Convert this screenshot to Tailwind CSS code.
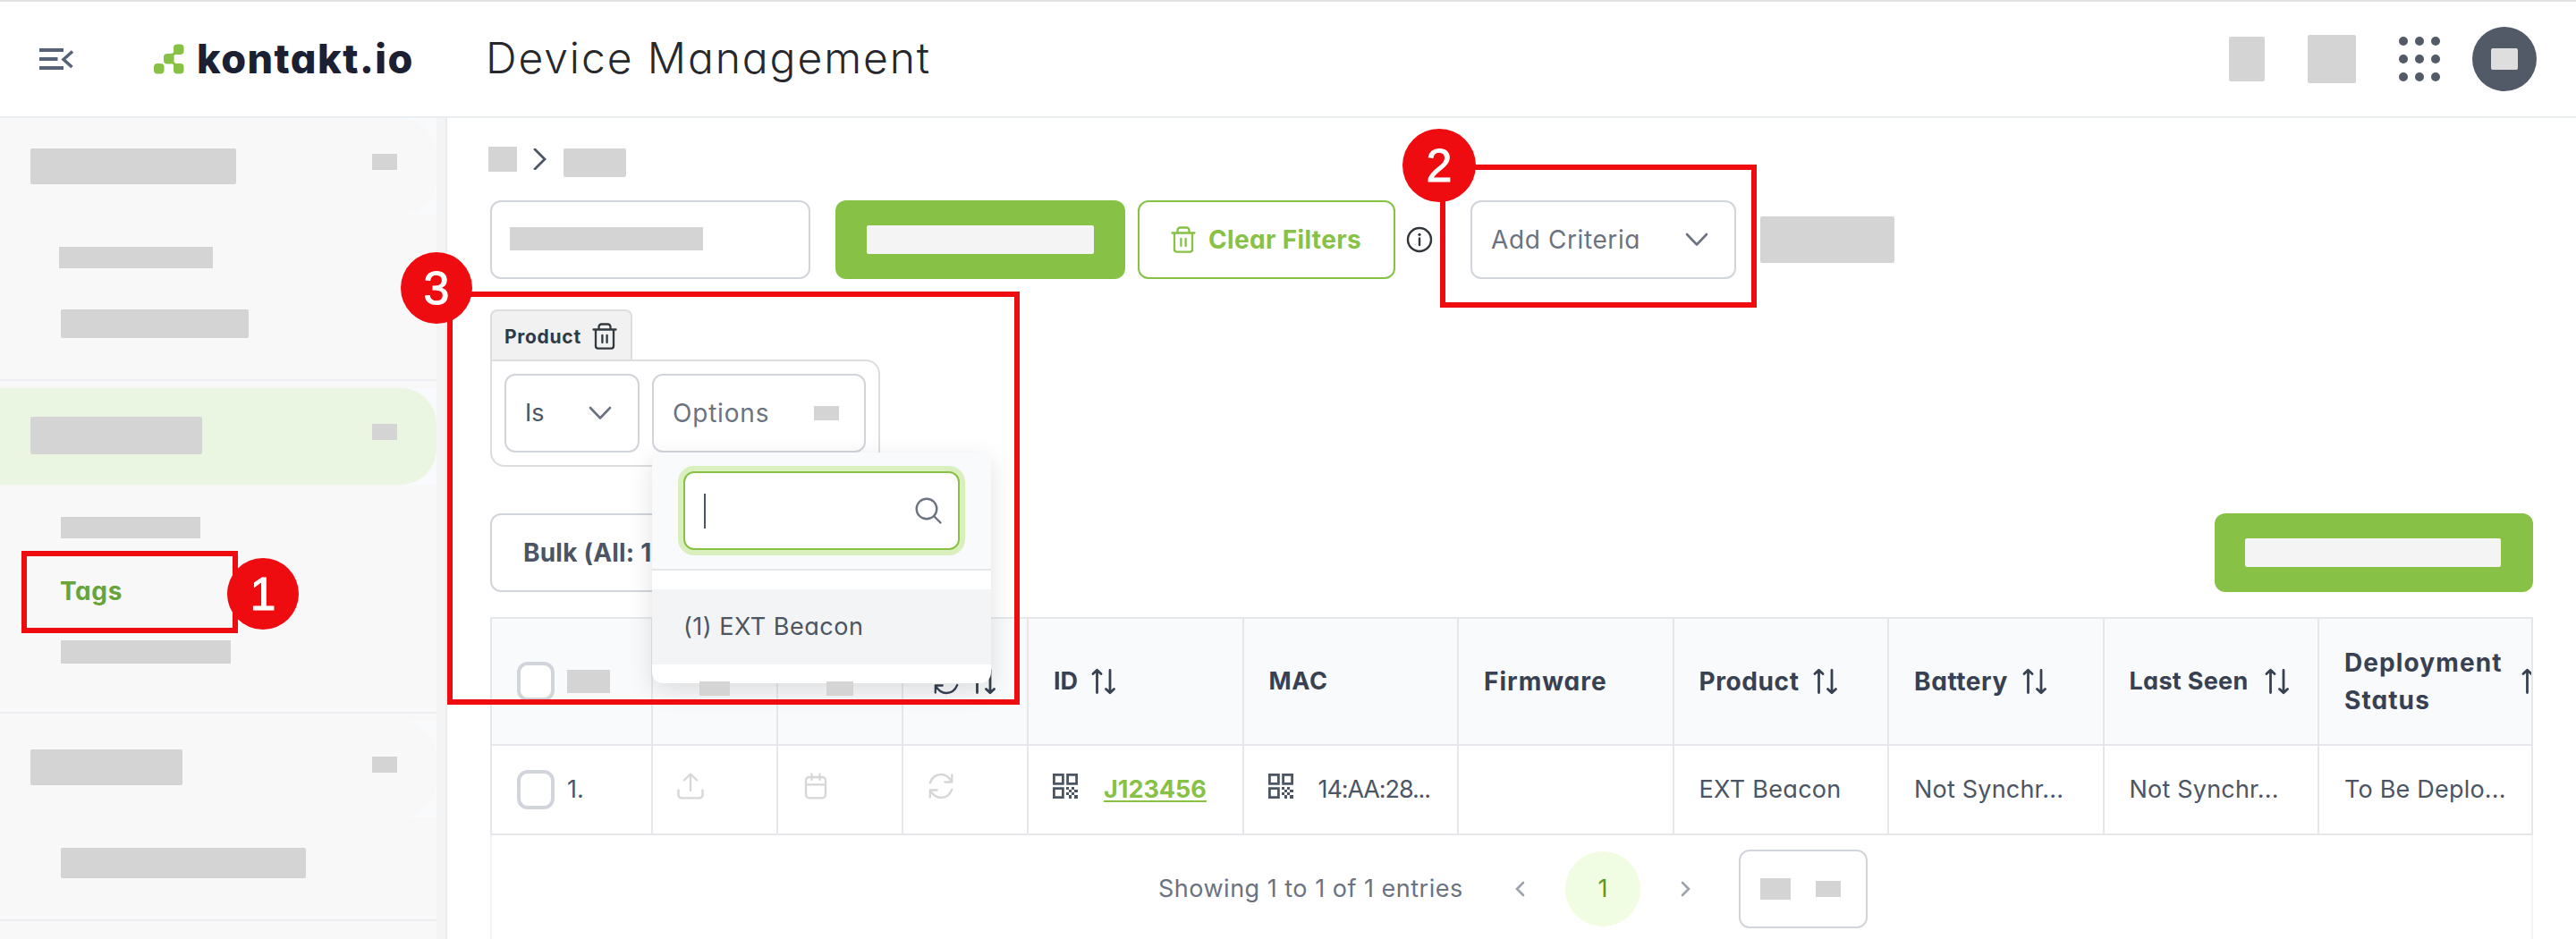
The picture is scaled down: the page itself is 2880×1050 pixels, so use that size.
<!DOCTYPE html>
<html lang="en">
  <head>
    <meta charset="UTF-8" />
    <meta name="viewport" content="width=device-width, initial-scale=1.0" />
    <title>Device Management</title>
    <script src="https://cdn.jsdelivr.net/npm/@tailwindcss/browser@4"></script>
  </head>
  <body
    class="relative w-[2880px] h-[1050px] overflow-hidden bg-white font-['Inter',sans-serif] text-[27px] text-[#4b5563] [font-feature-settings:'cv11']"
  >
    <!-- Shared icons -->
    <svg class="hidden">
      <symbol id="trash" viewBox="0 0 28 30">
        <g fill="none" stroke="currentColor" stroke-width="2.3" stroke-linecap="round" stroke-linejoin="round">
          <path d="M1.5 7.5h25M7.5 7V4.5a3 3 0 0 1 3-3h7a3 3 0 0 1 3 3V7M4 7.5V26a2.6 2.6 0 0 0 2.6 2.6h14.8A2.6 2.6 0 0 0 24 26V7.5M11.4 14v8M16.6 14v8" />
        </g>
      </symbol>
      <symbol id="sort" viewBox="0 0 28 30">
        <g fill="none" stroke="currentColor" stroke-width="2.8" stroke-linecap="round" stroke-linejoin="round">
          <path d="M6.5 27.5V2.5M2 6.5l4.5-4.3L11 6.5M21 2.5v25M16.5 23.5l4.5 4.3 4.5-4.3" />
        </g>
      </symbol>
      <symbol id="refresh" viewBox="0 0 28 30">
        <g fill="none" stroke="currentColor" stroke-width="2.3" stroke-linecap="round" stroke-linejoin="round">
          <path d="M1.8 11.5C4 5.5 9 2 14.5 2c4.8 0 8.5 3 11.8 8M26.3 2.5v8h-8M26.2 19c-2.2 5.5-7 9-12.4 9-4.8 0-8.6-3-12-8M1.8 27.5v-8h8" />
        </g>
      </symbol>
      <symbol id="chevron" viewBox="0 0 26 16">
        <path d="M2 2l11 11.500L24 2" fill="none" stroke="currentColor" stroke-width="2.6" stroke-linecap="round" stroke-linejoin="round" />
      </symbol>
      <symbol id="qr" viewBox="0 0 30 30">
        <g fill="none" stroke="currentColor" stroke-width="2.8">
          <path d="M2.4 2.4h10v10h-10zM17.6 2.4h10v10h-10zM2.4 17.6h10v10h-10z" />
        </g>
        <path
          fill="currentColor"
          d="M16 16h3v3h-3zM22 16h3v3h-3zM19 19h3v3h-3zM25 19h4v3h-4zM16 22h3v3h-3zM22 22h3v3h-3zM19 25h3v4h-3zM25 25h4v4h-4z"
        />
      </symbol>
    </svg>

    <header class="flex items-center h-[132px] border-t-2 border-t-[#e2e2e2] border-b-2 border-b-[#e9eef3] px-11">
      <svg class="w-10 h-[26px]" viewBox="0 0 40 26">
        <path d="M0 3h27M0 13h20.5M0 23h27" stroke="#566377" stroke-width="4" />
        <path d="M37 4.5L27 13.5l9.5 8.5" fill="none" stroke="#566377" stroke-width="3.6" />
      </svg>
      <div class="flex items-center ml-22 w-[371px]">
        <svg class="w-[34px] h-[34px]" viewBox="0 0 34 34" fill="#87c145">
          <rect x="0" y="22" width="11.5" height="11.5" rx="4" />
          <rect x="11" y="11" width="11.5" height="11.5" rx="4" />
          <rect x="22" y="0.5" width="11.5" height="11.5" rx="4" />
          <rect x="22" y="22" width="11.5" height="11.5" rx="4" />
          <path d="M17 11c4 0 6-1 6.5-4l4 4.500c-4 0-6 1.500-6.500 4.500 0 3 2.500 6.500 6.500 6.500L23 27c0-4-3-5.500-6-5.500z" />
        </svg>
        <span class="mb-0.5 ml-3.5 text-[45px] leading-none font-extrabold tracking-[1.5px] text-[#1b2032]">kontakt.io</span>
      </div>
      <h1 class="mb-0.5 text-[48px] leading-none font-light tracking-[1.9px] text-[#26282e]">Device Management</h1>
      <div class="ml-auto flex items-center">
        <div class="w-10 h-[50px] rounded-[2px] bg-[#d4d4d4]"></div>
        <div class="ml-12 w-[54px] h-[54px] rounded-[2px] bg-[#d4d4d4]"></div>
        <svg class="ml-12 w-[46px] h-[50px]" viewBox="0 0 46 50" fill="#535a67">
          <circle cx="5" cy="5" r="5" />
          <circle cx="23" cy="5" r="5" />
          <circle cx="41" cy="5" r="5" />
          <circle cx="5" cy="25" r="5" />
          <circle cx="23" cy="25" r="5" />
          <circle cx="41" cy="25" r="5" />
          <circle cx="5" cy="45" r="5" />
          <circle cx="23" cy="45" r="5" />
          <circle cx="41" cy="45" r="5" />
        </svg>
        <div class="ml-9 size-18 rounded-full bg-[#535a67] flex items-center justify-center">
          <div class="w-[30px] h-6 rounded-[2px] bg-[#dedede]"></div>
        </div>
      </div>
    </header>

    <div class="flex h-[918px]">
      <aside class="w-[500px] shrink-0 border-r-2 border-[#ebebeb] bg-[#f4f4f4] pr-2.5">
        <nav class="h-full bg-[#f8f8f8]">
          <div class="h-[294px] border-b-2 border-[#ededf2]">
            <div class="bg-[#f9fafc]">
              <div class="flex justify-between h-[108px] rounded-r-[40px] bg-[#f8f8f8] pt-[34px] pl-[34px] pr-11">
                <div class="w-[230px] h-10 rounded-[2px] bg-[#d4d4d4]"></div>
                <div class="mt-1.5 w-7 h-[18px] bg-[#d4d4d4]"></div>
              </div>
            </div>
            <div class="mt-9 ml-[66px] w-[172px] h-6 bg-[#d4d4d4]"></div>
            <div class="mt-[46px] ml-[68px] w-[210px] h-8 rounded-[2px] bg-[#d4d4d4]"></div>
          </div>
          <div class="h-[372px] border-b-2 border-[#ededf2] pt-2">
            <div class="bg-[#f8fafd]">
              <div class="flex justify-between h-[108px] rounded-r-[40px] bg-[#eaf6e1] pt-8 pl-[34px] pr-11">
                <div class="w-48 h-[42px] rounded-[2px] bg-[#d4d4d4]"></div>
                <div class="mt-2 w-7 h-[18px] bg-[#d4d4d4]"></div>
              </div>
            </div>
            <div class="mt-9 ml-[68px] w-[156px] h-6 bg-[#d4d4d4]"></div>
            <div class="mt-[38px] ml-[67px] h-[42px] leading-[42px] text-[28px] font-bold tracking-[0.6px] text-[#67a53c]">Tags</div>
            <div class="mt-[34px] ml-[68px] w-[190px] h-[26px] bg-[#d4d4d4]"></div>
          </div>
          <div class="h-[232px] border-b-2 border-[#ededf2] pt-2">
            <div class="bg-[#f9fafc]">
              <div class="flex justify-between h-[108px] rounded-r-[40px] bg-[#f8f8f8] pt-8 pl-[34px] pr-11">
                <div class="w-[170px] h-10 rounded-[2px] bg-[#d4d4d4]"></div>
                <div class="mt-2 w-7 h-[18px] bg-[#d4d4d4]"></div>
              </div>
            </div>
            <div class="mt-[34px] ml-[68px] w-[274px] h-[34px] rounded-[2px] bg-[#d4d4d4]"></div>
          </div>
        </nav>
      </aside>

      <main class="flex-1 flex flex-col pt-8 px-12">
        <!-- Breadcrumb -->
        <div class="flex h-[60px] -ml-0.5">
          <div class="w-8 h-7 bg-[#d4d4d4]"></div>
          <svg class="ml-[18px] mt-0.5 w-4 h-6" viewBox="0 0 16 24">
            <path d="M2 1l11 11L2 23" fill="none" stroke="#4b5563" stroke-width="2.8" stroke-linecap="round" />
          </svg>
          <div class="ml-[18px] mt-0.5 w-[70px] h-8 rounded-[2px] bg-[#d4d4d4]"></div>
        </div>

        <!-- Toolbar -->
        <div class="flex items-center h-[88px]">
          <div class="w-[358px] h-full border-2 border-[#d1d5db] rounded-xl pt-7 pl-5">
            <div class="w-[216px] h-[26px] bg-[#d4d4d4]"></div>
          </div>
          <div class="ml-7 w-[324px] h-full rounded-xl bg-[#87c145] flex items-center justify-center">
            <div class="w-[254px] h-8 rounded-[2px] bg-[#f4f4f4]"></div>
          </div>
          <div class="ml-3.5 w-[288px] h-full border-2 border-[#87c145] rounded-xl flex items-center pl-[35px] text-[#87c145]">
            <svg class="w-7 h-[30px]"><use href="#trash" /></svg>
            <span class="ml-3.5 text-[28px] font-bold tracking-[0.35px] whitespace-nowrap">Clear Filters</span>
          </div>
          <svg class="ml-3 w-[30px] h-[30px]" viewBox="0 0 30 30">
            <circle cx="15" cy="15" r="13" fill="none" stroke="#2f353b" stroke-width="2.4" />
            <path d="M15 13.5v7.500" stroke="#2f353b" stroke-width="2.4" stroke-linecap="round" />
            <circle cx="15" cy="9.3" r="1.6" fill="#2f353b" />
          </svg>
          <div class="ml-[42px] w-[297px] h-full border-2 border-[#d1d5db] rounded-xl flex items-center justify-between pl-[21px] pr-[29px] text-[#6b7280]">
            <span class="text-[28px] tracking-[0.6px]">Add Criteria</span>
            <svg class="w-[26px] h-4"><use href="#chevron" /></svg>
          </div>
          <div class="ml-[27px] w-[150px] h-[52px] rounded-[2px] bg-[#d4d4d4]"></div>
        </div>

        <!-- Product filter -->
        <div class="mt-[34px] w-[159px] h-14 rounded-t-lg border-2 border-b-0 border-[#dddddd] bg-[#f1f1f1] flex items-center pl-3.5 pt-0.5 text-[#333a3f]">
          <span class="pt-0.5 text-[21px] font-bold tracking-[0.7px]">Product</span>
          <svg class="ml-3 w-7 h-[30px]"><use href="#trash" /></svg>
        </div>
        <div class="relative w-[436px] h-30 rounded-2xl rounded-tl-none border-2 border-[#dddddd] flex gap-3.5 pt-3.5 pl-3.5">
          <div class="w-[151px] h-[88px] border-2 border-[#d1d5db] rounded-xl flex items-center justify-between pl-[21px] pr-[29px]">
            <span>Is</span>
            <svg class="w-[26px] h-4 text-[#6b7280]"><use href="#chevron" /></svg>
          </div>
          <div class="w-[239px] h-[88px] border-2 border-[#d1d5db] rounded-xl flex items-center justify-between pl-[21px] pr-7 text-[#6b7280]">
            <span class="text-[28px] tracking-[0.8px]">Options</span>
            <div class="w-7 h-4 bg-[#d4d4d4]"></div>
          </div>

          <!-- Options dropdown -->
          <div class="absolute z-10 left-[179px] top-[102px] w-[379px] h-[258px] rounded-b-xl rounded-t-lg bg-white shadow-[0_8px_28px_rgba(0,0,0,0.12)]">
            <div class="h-[132px] rounded-t-lg border-b-2 border-[#e5e7eb] bg-[#f9fafc] pt-[21px] pl-[35px]">
              <div class="w-[309px] h-[88px] border-2 border-[#87c145] rounded-xl bg-white ring-6 ring-[#d9efbd] flex items-center justify-between pl-[21px] pr-[18px]">
                <div class="w-0.5 h-[39px] bg-[#4b5563]"></div>
                <svg class="w-[30px] h-[30px]" viewBox="0 0 30 30">
                  <circle cx="13" cy="13" r="11.3" fill="none" stroke="#6b7280" stroke-width="2.4" />
                  <path d="M21 21l7.5 7.500" stroke="#6b7280" stroke-width="2.4" stroke-linecap="round" />
                </svg>
              </div>
            </div>
            <div class="mt-[21px] h-[84px] bg-[#f3f4f6] flex items-center pl-[35px] tracking-[0.5px]">(1) EXT Beacon</div>
          </div>
        </div>

        <!-- Bulk actions -->
        <div class="mt-[52px] flex justify-between h-[88px]">
          <div class="w-[240px] border-2 border-[#d1d5db] rounded-xl flex items-center pl-[35px] text-[28px] font-bold tracking-[0.2px]">Bulk (All: 1)</div>
          <div class="w-[356px] rounded-xl bg-[#87c145] pt-7 pl-[34px]">
            <div class="w-[286px] h-8 rounded-[2px] bg-[#f4f4f4]"></div>
          </div>
        </div>

        <!-- Devices table -->
        <div class="mt-7 flex-1 w-[2284px] border-x-2 border-[#f3f4f6]">
          <div class="-mx-0.5 w-[2284px]">
            <div
              class="grid grid-cols-[182px_140px_140px_140px_repeat(6,240.5px)_239px] h-36 border-y-2 border-[#e5e7eb] bg-[#f9fafc] font-bold text-[#374151] *:border-r-2 *:border-[#e5e7eb] *:flex *:items-center *:overflow-hidden *:whitespace-nowrap"
            >
              <div class="border-l-2 pl-7">
                <div class="w-[42px] h-11 border-4 border-[#d1d5db] rounded-xl bg-white"></div>
                <div class="ml-3.5 w-12 h-[26px] bg-[#d4d4d4]"></div>
              </div>
              <div></div>
              <div></div>
              <div class="pl-[34px]">
                <svg class="w-7 h-[30px]"><use href="#refresh" /></svg>
                <svg class="ml-3.5 w-7 h-[30px]"><use href="#sort" /></svg>
              </div>
              <div class="pl-7">
                <span>ID</span>
                <svg class="ml-[15px] w-7 h-[30px]"><use href="#sort" /></svg>
              </div>
              <div class="pl-7 tracking-[0.7px]">MAC</div>
              <div class="pl-7 text-[28px] tracking-[1px]">Firmware</div>
              <div class="pl-7">
                <span class="w-[115px] text-[28px] tracking-[0.6px]">Product</span>
                <svg class="ml-3 w-7 h-[30px]"><use href="#sort" /></svg>
              </div>
              <div class="pl-7">
                <span class="w-[107px] text-[28px] tracking-[0.6px]">Battery</span>
                <svg class="ml-3.5 w-7 h-[30px]"><use href="#sort" /></svg>
              </div>
              <div class="pl-7">
                <span class="w-[135px] tracking-[0.3px]">Last Seen</span>
                <svg class="ml-4 w-7 h-[30px]"><use href="#sort" /></svg>
              </div>
              <div class="pl-7">
                <span class="shrink-0 w-[178px] text-[28px] leading-[42px] tracking-[1.1px]">Deployment<br />Status</span>
                <svg class="ml-5 shrink-0 w-7 h-[30px]"><use href="#sort" /></svg>
              </div>
            </div>
            <div
              class="grid grid-cols-[182px_140px_140px_140px_repeat(6,240.5px)_239px] h-25 border-b-2 border-[#e5e7eb] *:border-r-2 *:border-[#e5e7eb] *:flex *:items-center *:overflow-hidden *:whitespace-nowrap"
            >
              <div class="border-l-2 pl-7">
                <div class="w-[42px] h-11 border-4 border-[#d1d5db] rounded-xl bg-white"></div>
                <span class="ml-3.5">1.</span>
              </div>
              <div class="pl-[27px] pb-2">
                <svg class="w-[30px] h-[30px]" viewBox="0 0 30 30">
                  <g fill="none" stroke="#d6d6d6" stroke-width="2.3" stroke-linecap="round" stroke-linejoin="round">
                    <path d="M15 20V2M8 8.5L15 1.5l7 7M1.5 19.5V25A3.3 3.3 0 0 0 4.8 28.3h20.4A3.3 3.3 0 0 0 28.5 25v-5.500" />
                  </g>
                </svg>
              </div>
              <div class="pl-[29px] pb-2">
                <svg class="w-[26px] h-[30px]" viewBox="0 0 26 30">
                  <g fill="none" stroke="#d6d6d6" stroke-width="2.3" stroke-linecap="round">
                    <rect x="2" y="5" width="22" height="23.3" rx="3.5" />
                    <path d="M2 13.3h22M8.5 1.5v6.500M17.5 1.5v6.500" />
                  </g>
                </svg>
              </div>
              <div class="pl-7 pb-2">
                <svg class="w-7 h-[30px] text-[#d6d6d6]"><use href="#refresh" /></svg>
              </div>
              <div class="pl-[26px]">
                <svg class="mb-2 w-[30px] h-[30px]"><use href="#qr" /></svg>
                <span class="ml-7 font-bold text-[#87c145] underline decoration-2 underline-offset-3">J123456</span>
              </div>
              <div class="pl-[26px]">
                <svg class="mb-2 w-[30px] h-[30px]"><use href="#qr" /></svg>
                <span class="ml-[27px] tracking-[-1.1px]">14:AA:28...</span>
              </div>
              <div></div>
              <div class="pl-7 tracking-[0.3px]">EXT Beacon</div>
              <div class="pl-7 tracking-[0.2px]">Not Synchr...</div>
              <div class="pl-7 tracking-[0.2px]">Not Synchr...</div>
              <div class="pl-7 tracking-[0.2px]">To Be Deplo...</div>
            </div>
          </div>

          <!-- Pagination -->
          <div class="flex items-center pt-4 pl-[745px] text-[#6b7280]">
            <span class="w-[398px] tracking-[0.5px]">Showing 1 to 1 of 1 entries</span>
            <svg class="w-3 h-[18px]" viewBox="0 0 12 18">
              <path d="M10 2L3 9l7 7" fill="none" stroke="#9ca3af" stroke-width="2.6" stroke-linecap="round" />
            </svg>
            <div class="ml-[45px] size-21 rounded-full bg-[#f1fde2] flex items-center justify-center text-[#5a9a20]">1</div>
            <svg class="ml-[45px] w-3 h-[18px]" viewBox="0 0 12 18">
              <path d="M2 2l7 7-7 7" fill="none" stroke="#9ca3af" stroke-width="2.6" stroke-linecap="round" />
            </svg>
            <div class="ml-[53px] w-36 h-[88px] border-2 border-[#d1d5db] rounded-xl flex items-center gap-7 pl-[22px]">
              <div class="w-[34px] h-6 bg-[#d4d4d4]"></div>
              <div class="w-7 h-[18px] bg-[#d4d4d4]"></div>
            </div>
          </div>
        </div>
      </main>
    </div>

    <!-- Masked header cells, drawn over the dropdown edge -->
    <div class="absolute z-20 left-[782px] top-[762px] w-[34px] h-4 bg-[#d4d4d4]"></div>
    <div class="absolute z-20 left-[924px] top-[762px] w-[30px] h-4 bg-[#d4d4d4]"></div>

    <!-- Step callouts -->
    <div class="absolute z-30 left-[24px] top-[616px] w-[242px] h-[92px] border-6 border-[#ee0c10]"></div>
    <div class="absolute z-30 left-[254px] top-[624px] size-20 rounded-full bg-[#ee0c10] flex items-center justify-center font-['Liberation_Sans',sans-serif] text-[52px] leading-none text-white [-webkit-text-stroke:1px_white]">1</div>
    <div class="absolute z-30 left-[1610px] top-[184px] w-[354px] h-40 border-6 border-[#ee0c10]"></div>
    <div class="absolute z-30 left-[1568px] top-[144px] size-[82px] rounded-full bg-[#ee0c10] flex items-center justify-center font-['Liberation_Sans',sans-serif] text-[52px] leading-none text-white [-webkit-text-stroke:1px_white]">2</div>
    <div class="absolute z-30 left-[500px] top-[326px] w-[640px] h-[462px] border-6 border-[#ee0c10]"></div>
    <div class="absolute z-30 left-[448px] top-[282px] size-20 rounded-full bg-[#ee0c10] flex items-center justify-center font-['Liberation_Sans',sans-serif] text-[52px] leading-none text-white [-webkit-text-stroke:1px_white]">3</div>
  </body>
</html>
